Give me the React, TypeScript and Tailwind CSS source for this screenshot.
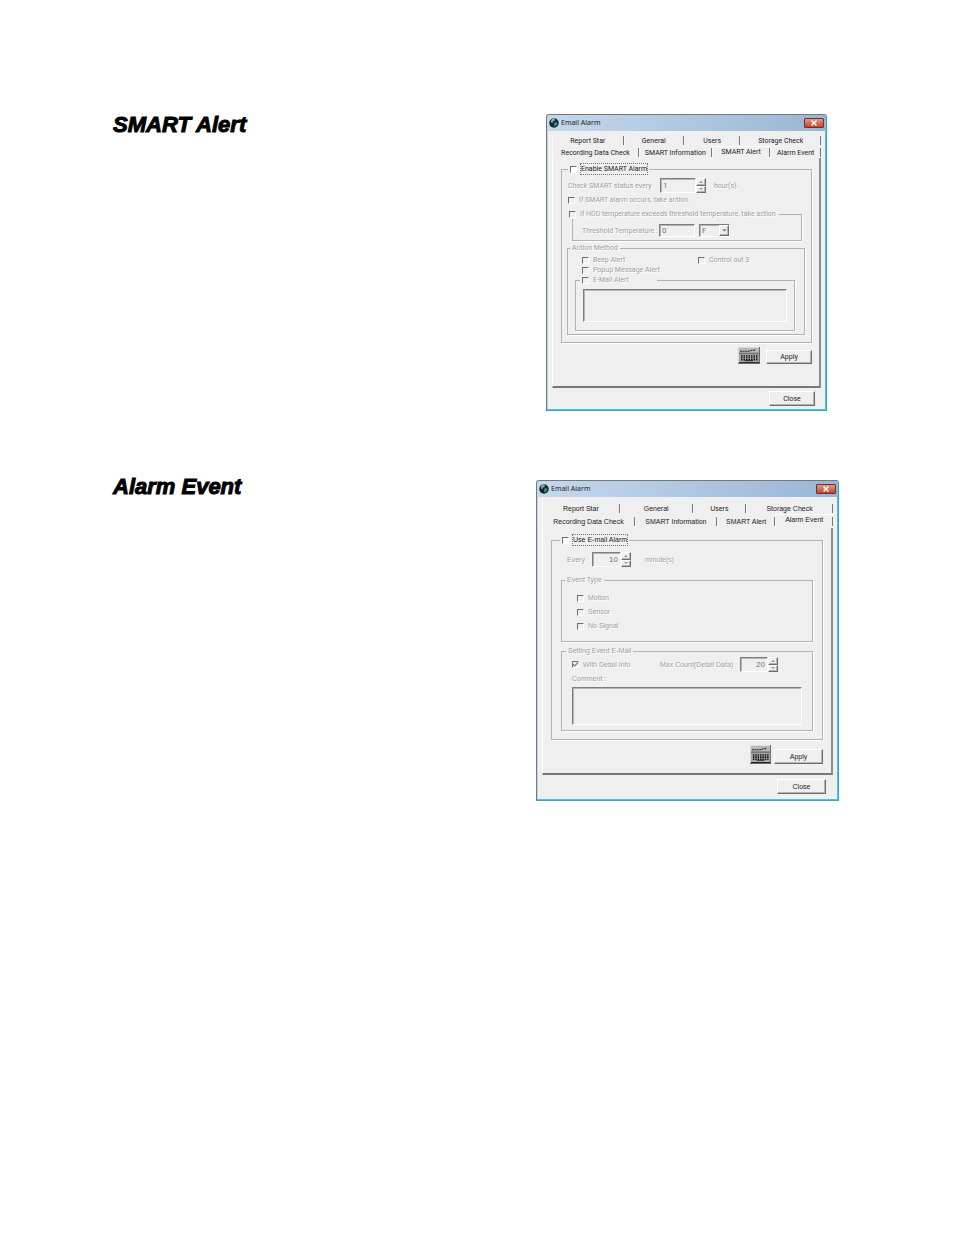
import React from 'react';
import { Check, X } from 'lucide-react';
import clsx from 'clsx';

interface Tab {
  name: string;
  active?: boolean;
}

const SUNKEN =
  'border border-t-[#7d7d7d] border-l-[#7d7d7d] border-r-white border-b-white bg-[#efefef] shadow-[inset_1px_1px_0_#b4b4b4] outline-none';
const RAISED =
  'border border-t-white border-l-white border-r-[#6e6e6e] border-b-[#6e6e6e] bg-[#efefef] shadow-[inset_-1px_-1px_0_#b4b4b4]';
const DISABLED = 'text-[#a0a0a0] [text-shadow:1px_1px_0_#fff]';
const HEADING = "font-['Liberation_Sans',sans-serif] text-[22px] leading-[14px] font-bold italic [-webkit-text-stroke:1px_#000]";

const AppIcon = () => (
  <svg viewBox="0 0 20 20" className="h-[10px] w-[10px] shrink-0" aria-hidden="true">
    <circle cx="10" cy="10" r="9.5" fill="#14262b" />
    <path d="M4 6c2-3 5-4 8-3l-1 3-3 1-1 3-3-1z" fill="#6fb3a8" />
    <path d="M10 10l4-2 3 2-2 5-4 2-1-3z" fill="#3d8c84" />
    <path d="M5 4c2-2 4-2 6-2" stroke="#e3f1f0" strokeWidth="1.5" fill="none" />
  </svg>
);

const KeyboardIcon = ({ className }: { className: string }) => (
  <svg viewBox="0 0 22 18" preserveAspectRatio="none" className={className} aria-hidden="true">
    <rect width="22" height="18" fill="#666" />
    <rect width="21" height="17" fill="#dcdcdc" />
    <rect x="1" y="1" width="20" height="16" fill="#b8b8b8" />
    <path d="M2 4.5h9l3-1h3v-1" stroke="#222" strokeWidth="1" fill="none" strokeDasharray="2 .6" />
    <path d="M1 6h20v2H1z" fill="#777" />
    <path d="M1 8h20v8H1z" fill="#a8a8a8" />
    <path d="M3 9.5h17M3 11.5h17M3 13.5h17" stroke="#111" strokeWidth="1.5" strokeDasharray="1.5 1" />
    <path d="M7 14.5h8M1 16.5h20" stroke="#222" strokeWidth="1" />
  </svg>
);

interface CheckFieldProps {
  id: string;
  label: string;
  disabled?: boolean;
  checked?: boolean;
  focused?: boolean;
}

const CheckField: React.FC<CheckFieldProps> = ({ id, label, disabled = true, checked, focused }) => (
  <span className="flex h-[10px] items-center gap-1">
    <span className="relative flex">
      <input
        id={id}
        type="checkbox"
        disabled={disabled}
        defaultChecked={checked}
        className={clsx(
          'h-[7px] w-[7px] appearance-none border border-t-[#6f6f6f] border-l-[#6f6f6f] border-r-white border-b-white',
          disabled ? 'bg-[#efefef]' : 'bg-white'
        )}
      />
      {checked && <Check className="pointer-events-none absolute inset-0 h-[7px] w-[7px] text-[#777]" strokeWidth={4} />}
    </span>
    <label
      htmlFor={id}
      className={clsx('whitespace-nowrap', focused && 'text-[#222] outline outline-dotted outline-[#777]', disabled && DISABLED)}
    >
      {label}
    </label>
  </span>
);

interface SpinnerProps {
  id: string;
  value: string;
  className: string;
  alignRight?: boolean;
}

const Spinner: React.FC<SpinnerProps> = ({ id, value, className, alignRight }) => (
  <span className={clsx('flex h-[15px]', className)}>
    <input
      id={id}
      type="text"
      disabled
      defaultValue={value}
      className={clsx('min-w-0 flex-1 px-[2px] text-[8px] text-[#777]', SUNKEN, alignRight && 'text-right')}
    />
    <span className="flex w-[10px] flex-col">
      <button type="button" disabled aria-label="Increase" className={clsx('flex flex-1 items-center justify-center', RAISED)}>
        <svg viewBox="0 0 4 2" className="h-[2px] w-[4px]"><path d="M0 2l2-2 2 2z" fill="#999" /></svg>
      </button>
      <button type="button" disabled aria-label="Decrease" className={clsx('flex flex-1 items-center justify-center', RAISED)}>
        <svg viewBox="0 0 4 2" className="h-[2px] w-[4px]"><path d="M0 0l2 2 2-2z" fill="#999" /></svg>
      </button>
    </span>
  </span>
);

const Group = ({ legend, legendClass, className, children }: {
  legend: React.ReactNode;
  legendClass?: string;
  className: string;
  children: React.ReactNode;
}) => (
  <fieldset className={clsx('min-w-0 border border-[#b2b2b2] shadow-[1px_1px_0_#fff]', className)}>
    <legend className={clsx('h-[10px] px-[2px] leading-[10px]', legendClass)}>{legend}</legend>
    {children}
  </fieldset>
);

const TabRow = ({ tabs, className }: { tabs: Tab[]; className: string }) => (
  <div role="tablist" className={clsx('grid', className)}>
    {tabs.map((tab) => (
      <button
        key={tab.name}
        type="button"
        role="tab"
        aria-selected={!!tab.active}
        className={clsx(
          'flex justify-center border-l border-l-[#f8f8f8] whitespace-nowrap text-[#222]',
          tab.active ? '-mt-px items-start border-t border-t-white' : 'items-center'
        )}
      >
        <span className="flex-1">{tab.name}</span>
        <span className="h-[9px] w-px self-center bg-[#777]" />
      </button>
    ))}
  </div>
);

const Dialog = ({ title, className, bodyClass, children }: {
  title: string;
  className: string;
  bodyClass: string;
  children: React.ReactNode;
}) => (
  <section
    aria-label={title}
    className={clsx(
      'shrink-0 rounded-t-[3px] border border-t-[#777] border-l-[#777] border-r-[#35a5c2] border-b-[#4a9db2] bg-[#efefef] leading-[10px] shadow-[inset_-1px_-1px_0_#3fc8ea,inset_1px_0_0_#bcd6ee]',
      className
    )}
  >
    <header className="flex h-4 items-center gap-[2px] rounded-t-[2px] bg-linear-to-r from-[#c5d8ec] to-[#9ab6d5] px-[2px] text-[#222]">
      <AppIcon />
      <h3 className="flex-1 font-['Noto_Sans',sans-serif] text-[7px]">{title}</h3>
      <button
        type="button"
        aria-label="Close window"
        className="flex h-[10px] w-5 items-center justify-center rounded-[1px] border border-[#7d2b20] bg-linear-to-b from-[#dc9a8c] to-[#bb4630] text-white"
      >
        <X className="h-[8px] w-[8px]" strokeWidth={4} />
      </button>
    </header>
    <div className={clsx('px-[5px]', bodyClass)}>{children}</div>
  </section>
);

const Panel = ({ className, children }: { className: string; children: React.ReactNode }) => (
  <div
    role="tabpanel"
    className={clsx('border-r-2 border-b-2 border-l border-l-white border-r-[#8c8c8c] border-b-[#777] pl-2', className)}
  >
    {children}
  </div>
);

const SmartAlertDialog = () => (
  <Dialog title="Email Alarm" className="mr-3 w-[281px] font-['Roboto',sans-serif] text-[7px]" bodyClass="pt-[3px] pb-1">
    <TabRow
      className="h-[13px] grid-cols-[71fr_60fr_56fr_80fr]"
      tabs={[{ name: 'Report Star' }, { name: 'General' }, { name: 'Users' }, { name: 'Storage Check' }]}
    />
    <TabRow
      className="h-[11px] grid-cols-[86fr_72fr_58fr_50fr]"
      tabs={[
        { name: 'Recording Data Check' },
        { name: 'SMART Information' },
        { name: 'SMART Alert', active: true },
        { name: 'Alarm Event' }
      ]}
    />
    <Panel className="pt-[6px] pr-[7px] pb-[22px]">
      <Group
        className="px-[5px] pb-[7px]"
        legendClass="ml-[1px]"
        legend={<CheckField id="enable-smart" label="Enable SMART Alarm" disabled={false} focused />}
      >
        <div className={clsx('mt-1 flex items-center pl-[1px]', DISABLED)}>
          <label htmlFor="smart-hours" className="w-[92px]">Check SMART status every</label>
          <Spinner id="smart-hours" value="1" className="w-[46px]" />
          <span className="pl-2">hour(s).</span>
        </div>
        <div className="mt-[2px] pl-[1px]">
          <CheckField id="smart-action" label="If SMART alarm occurs, take action." />
        </div>
        <Group
          className="mt-1 mr-1 ml-[5px] px-[9px] pb-[3px]"
          legendClass="-ml-[15px] w-[212px]"
          legend={<CheckField id="hdd-action" label="If HDD temperature exceeds threshold temperature, take action" />}
        >
          <div className={clsx('mt-[5px] flex h-[13px] items-center', DISABLED)}>
            <label htmlFor="threshold" className="w-[77px] whitespace-nowrap">Threshold Temperature :</label>
            <input
              id="threshold"
              type="text"
              disabled
              defaultValue="0"
              className={clsx('h-full w-[36px] px-[2px] text-[8px] text-[#777]', SUNKEN)}
            />
            <span className="relative ml-1 h-full w-[31px]">
              <select
                aria-label="Temperature unit"
                disabled
                className={clsx('block h-full w-full appearance-none px-[2px] text-[8px] leading-[10px] text-[#777] opacity-100', SUNKEN)}
              >
                <option>F</option>
              </select>
              <span className={clsx('pointer-events-none absolute top-px right-px bottom-px flex w-[10px] items-center justify-center', RAISED)}>
                <svg viewBox="0 0 4 2" className="h-[3px] w-[5px]"><path d="M0 0l2 2 2-2z" fill="#888" /></svg>
              </span>
            </span>
          </div>
        </Group>
        <Group className="mt-[2px] mr-px px-[7px] pb-[3px]" legendClass={clsx('-ml-[5px]', DISABLED)} legend="Action Method">
          <div className="mt-[2px] grid grid-cols-[116px_1fr] pl-[7px]">
            <CheckField id="beep" label="Beep Alert" />
            <CheckField id="control-out" label="Control out 3" />
            <CheckField id="popup" label="Popup Message Alert" />
          </div>
          <Group
            className="mr-[2px] px-[7px] pb-2"
            legendClass="-ml-[3px] w-[77px]"
            legend={<CheckField id="email-alert" label="E-Mail Alert" />}
          >
            <textarea aria-label="E-Mail Alert text" disabled className={clsx('mt-1 block h-[33px] w-full resize-none', SUNKEN)} />
          </Group>
        </Group>
      </Group>
      <div className="mt-1 flex items-end justify-end gap-[6px]">
        <button type="button" aria-label="On-screen keyboard">
          <KeyboardIcon className="block h-[17px] w-[22px]" />
        </button>
        <button type="button" className={clsx('h-[14px] w-[46px] text-[#222]', RAISED)}>Apply</button>
      </div>
    </Panel>
    <div className="mt-[3px] flex justify-end pr-[6px]">
      <button type="button" className={clsx('h-[15px] w-[46px] text-[#222]', RAISED)}>Close</button>
    </div>
  </Dialog>
);

const AlarmEventDialog = () => (
  <Dialog title="Email Alarm" className="w-[303px] font-['Liberation_Sans',sans-serif] text-[7px]" bodyClass="pt-[5px] pb-[6px]">
    <TabRow
      className="h-[13px] grid-cols-[77fr_72fr_53fr_86fr]"
      tabs={[{ name: 'Report Star' }, { name: 'General' }, { name: 'Users' }, { name: 'Storage Check' }]}
    />
    <TabRow
      className="h-[13px] grid-cols-[92fr_81fr_58fr_57fr]"
      tabs={[
        { name: 'Recording Data Check' },
        { name: 'SMART Information' },
        { name: 'SMART Alert' },
        { name: 'Alarm Event', active: true }
      ]}
    />
    <Panel className="pt-[7px] pr-2 pb-[9px]">
      <Group
        className="px-[9px] pb-2"
        legendClass="-ml-px"
        legend={<CheckField id="use-email" label="Use E-mail Alarm" disabled={false} focused />}
      >
        <div className={clsx('mt-[7px] flex items-center pl-[6px]', DISABLED)}>
          <label htmlFor="every-minutes" className="w-[25px]">Every</label>
          <Spinner id="every-minutes" value="10" className="w-[39px]" alignRight />
          <span className="pl-[14px]">minute(s)</span>
        </div>
        <Group className="mt-2 px-[15px] pb-[10px]" legendClass={clsx('-ml-[12px]', DISABLED)} legend="Event Type">
          <div className="mt-2 flex flex-col gap-1">
            <CheckField id="motion" label="Motion" />
            <CheckField id="sensor" label="Sensor" />
            <CheckField id="no-signal" label="No Signal" />
          </div>
        </Group>
        <Group className="mt-1 px-[10px] pb-[5px]" legendClass={clsx('-ml-[6px]', DISABLED)} legend="Setting Event E-Mail">
          <div className={clsx('mt-px flex items-center', DISABLED)}>
            <span className="w-[88px]">
              <CheckField id="detail-info" label="With Detail Info" checked />
            </span>
            <label htmlFor="max-count" className="w-[80px] whitespace-nowrap">Max Count(Detail Data)</label>
            <Spinner id="max-count" value="20" className="w-[38px]" alignRight />
          </div>
          <label htmlFor="comment" className={clsx('mt-[2px] block', DISABLED)}>Comment :</label>
          <textarea id="comment" disabled className={clsx('mt-[3px] block h-[38px] w-full resize-none', SUNKEN)} />
        </Group>
      </Group>
      <div className="mt-[5px] flex items-end justify-end gap-[3px]">
        <button type="button" aria-label="On-screen keyboard">
          <KeyboardIcon className="block h-[19px] w-[21px]" />
        </button>
        <button type="button" className={clsx('h-[15px] w-[49px] text-[#222]', RAISED)}>Apply</button>
      </div>
    </Panel>
    <div className="mt-1 flex justify-end pr-[7px]">
      <button type="button" className={clsx('h-[15px] w-[49px] text-[#222]', RAISED)}>Close</button>
    </div>
  </Dialog>
);

export default function App() {
  return (
    <main className="min-h-screen bg-white pt-[114px] pr-[115px] pl-[113px] text-black">
      <section className="flex items-start justify-between">
        <h2 className={clsx('pt-1', HEADING)}>SMART Alert</h2>
        <SmartAlertDialog />
      </section>
      <section className="mt-[69px] flex items-start justify-between">
        <h2 className={HEADING}>Alarm Event</h2>
        <AlarmEventDialog />
      </section>
    </main>
  );
}
